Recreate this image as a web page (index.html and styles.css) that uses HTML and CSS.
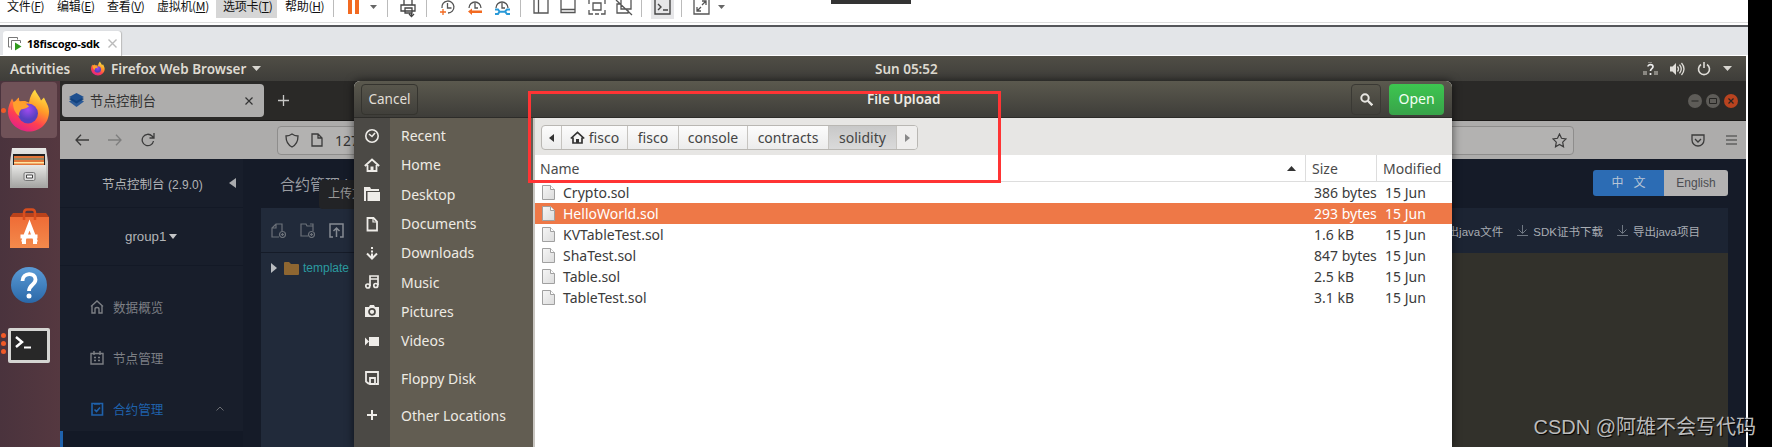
FILE: index.html
```html
<!DOCTYPE html>
<html lang="zh">
<head>
<meta charset="utf-8">
<title>18fiscogo-sdk</title>
<link rel="stylesheet" href="styles.css">
</head>
<body>
<div class="screen">
<div class="vm">
  <div class="menubar">
    <div class="menus">
      <span>文件(<u>F</u>)</span><span>编辑(<u>E</u>)</span><span>查看(<u>V</u>)</span><span>虚拟机(<u>M</u>)</span><span class="hot">选项卡(<u>T</u>)</span><span>帮助(<u>H</u>)</span>
    </div>
    <div class="tools">
      <i class="sep"></i>
      <div class="slot pause"><svg width="14" height="14"><path d="M1 0h4v14H1zM8 0h4v14H8z" fill="#f26a21"/></svg><svg width="7" height="4"><path d="M0 0h7L3.500 4z" fill="#666"/></svg></div>
      <i class="sep"></i>
      <div class="slot printer"><svg width="16" height="18" fill="none" stroke="#444" stroke-width="1.300"><path d="M4 5V0M12 5V0M1 5h14v6H1zM5 8h7v5H5zM11.500 13v3M9 14l2.500 2.500L14 14"/></svg></div>
      <i class="sep"></i>
      <div class="slots">
        <svg width="16" height="16" fill="none" stroke="#555" stroke-width="1.300"><path d="M3 8A6 6 0 1 1 9 13M8.500 3v5h4"/><path d="M4 9v6M1 12h6" stroke="#f26a21"/></svg>
        <svg width="16" height="16" fill="none" stroke="#555" stroke-width="1.300"><path d="M2 8A6 6 0 1 1 14 8M8 3v5h3"/><path d="M1 11.500l4-3v2h10v2.500H5v2z" fill="#f26a21" stroke="none"/></svg>
        <svg width="16" height="16" fill="none" stroke="#555" stroke-width="1.300"><path d="M2 8A6 6 0 1 1 14 8M8 3v5h3"/><path d="M1 9.500h3l1.500 2L4 14H1M5 11.700h6M16 9.500h-3l-2 2 2 2.500h3" stroke="#2a9ad8" stroke-width="2"/></svg>
      </div>
      <i class="sep"></i>
      <div class="slots">
        <svg width="16" height="16" fill="none" stroke="#555" stroke-width="1.300"><path d="M1 0v13h14V0M5.500 0v13"/></svg>
        <svg width="16" height="16" fill="none" stroke="#555" stroke-width="1.300"><path d="M1 0v12.500h14V0M1 9.500h14"/></svg>
        <svg width="18" height="16" fill="none" stroke="#555" stroke-width="1.300"><path d="M5 3h8v7H5zM1 10v4h4M17 10v4h-4M7 14h4M1 0v4M17 0v4"/></svg>
        <svg width="18" height="16" fill="none" stroke="#555" stroke-width="1.300"><path d="M5 4H2v9h11v-3M6 0v9h10V0M1 0l16 15"/></svg>
      </div>
      <i class="sep"></i>
      <div class="slot console"><svg width="17" height="16" fill="none" stroke="#444" stroke-width="1.400"><path d="M1 0v14h15V0M4 4l3 3-3 3M9 10h5"/></svg></div>
      <i class="sep"></i>
      <div class="slot expand"><svg width="17" height="16" fill="none" stroke="#555" stroke-width="1.300"><path d="M1 0v14h15V0M4 7v4h4M4 11l4-4M9 5l4-4M9 1h4v4"/></svg><svg width="7" height="4"><path d="M0 0h7L3.500 4z" fill="#666"/></svg></div>
    </div>
    <div class="handle"></div>
  </div>
  <div class="vmtabs">
    <div class="vmtab">
      <svg width="14" height="14" fill="none" stroke="#777"><path d="M2.500 10H.5V.5h9v2M4 12.500h-.5v-9h9V6"/><path d="M7 5.500l6.500 4L7 13.500z" fill="#2f9a1d" stroke="none"/></svg>
      <b>18fiscogo-sdk</b>
      <svg width="9" height="9" stroke="#bbb" stroke-width="1.400"><path d="M.5.5l8 8M8.500.5l-8 8"/></svg>
    </div>
  </div>
  <div class="guest">
    <div class="topbar">
      <span class="act">Activities</span>
      <svg class="ffs" viewBox="0 0 42 42"><use href="#fox"/></svg>
      <span class="app">Firefox Web Browser</span>
      <svg class="tri" width="9" height="5"><path d="M0 0h9L4.500 5z" fill="#d8d6d0"/></svg>
      <span class="clock">Sun 05:52</span>
      <div class="tray">
        <svg width="15" height="14"><path d="M0 9h4v4H0zM11 9h4v4h-4zM5 0h4v1H5z" fill="#8a8882"/><path d="M5 4.500C5 2 10 2 10 4.700c0 2-2.500 1.900-2.500 4.300M7.500 11v2" fill="none" stroke="#eee" stroke-width="1.700"/></svg>
        <svg width="15" height="14" fill="none" stroke="#dfddd8" stroke-width="1.300"><path d="M0 4.500h2.500L6 1v12L2.500 9.500H0z" fill="#dfddd8" stroke="none"/><path d="M7.500 4.500q2 2.500 0 5M9.500 2.700q3.500 4.300 0 8.600M11.500 1q5 6 0 12"/></svg>
        <svg width="14" height="14" fill="none" stroke="#dfddd8" stroke-width="1.600"><path d="M4 2.500a5.500 5.500 0 1 0 6 0M7 0v6"/></svg>
        <svg width="9" height="5"><path d="M0 0h9L4.500 5z" fill="#d8d6d0"/></svg>
      </div>
    </div>
    <div class="desk">
      <div class="launcher">
        <div class="lt on"><i class="dot"></i><svg width="42" height="43" viewBox="0 0 42 42">
          <defs>
            <linearGradient id="fg" x1=".8" y1="0" x2=".3" y2="1"><stop offset="0" stop-color="#fff04a"/><stop offset=".4" stop-color="#ff9a28"/><stop offset=".7" stop-color="#ff4050"/><stop offset="1" stop-color="#e0208a"/></linearGradient>
            <radialGradient id="fp" cx=".5" cy=".3"><stop offset="0" stop-color="#a04af0"/><stop offset="1" stop-color="#5840c0"/></radialGradient>
            <linearGradient id="gr" x1="0" y1="0" x2="0" y2="1"><stop offset="0" stop-color="#e8e8e6"/><stop offset="1" stop-color="#a5a5a3"/></linearGradient>
            <linearGradient id="or" x1="0" y1="0" x2="0" y2="1"><stop offset="0" stop-color="#ef6c36"/><stop offset="1" stop-color="#f38a4c"/></linearGradient>
            <linearGradient id="bl" x1="0" y1="0" x2="0" y2="1"><stop offset="0" stop-color="#5b9bd6"/><stop offset="1" stop-color="#2a68a8"/></linearGradient>
            <g id="fox"><path d="M27 0c1 4 5 7 6 11l3-3c1 3 5 8 5 14 0 12-9 20-20 20S0 33 0 22c0-5 2-9 4-13l2 4c2-2 3-4 5-5 0 2 0 3 1 4 5-1 6 0 9 1 1-6 3-10 6-13z" fill="url(#fg)"/><circle cx="20" cy="24" r="10" fill="url(#fp)"/><path d="M5 13c4-3 8-1 11 0 2 1 4 3 5 4-3 2-5 2-8 3-1 2-3 4-1 7-5-3-7-8-7-14z" fill="#ffa02d"/></g>
          </defs><use href="#fox"/></svg></div>
        <div class="lt files"><svg width="38" height="40"><path d="M2 0h34l2 14v26H0V14z" fill="url(#gr)"/><path d="M3 6h32v12H3z" fill="#222"/><path d="M4 8h30v2H4zM4 12h30v5H4z" fill="#e2763a"/><path d="M4 10.500h30v1H4zM4 14h30v1.500H4z" fill="#ffe4a0"/><path d="M2 17h34v22H2z" fill="url(#gr)"/><rect x="14" y="24.500" width="11" height="8" rx="1.500" fill="#ddd" stroke="#777"/><path d="M16.500 27h6v3h-6z" fill="#fff" stroke="#444"/></svg></div>
        <div class="lt soft"><svg width="39" height="40"><path d="M0 9l3-4h33l3 4z" fill="#b9421b"/><path d="M0 9h39v31H0z" fill="url(#or)"/><path d="M14 12V5q0-3.500 3-3.500h5q3 0 3 3.500v7" fill="none" stroke="#d84e1e" stroke-width="2.500"/><path d="M13 34l6.500-17L26 34M10.500 28.500h17M12 34h4M23 34h4" fill="none" stroke="#fff" stroke-width="4"/></svg></div>
        <div class="lt help"><svg width="38" height="38"><circle cx="19" cy="19" r="18" fill="url(#bl)"/><path d="M12.500 15c0-9 13-9 13-1.500 0 5.500-6.500 5-6.500 11.500" fill="none" stroke="#fff" stroke-width="3.800"/><circle cx="19" cy="30" r="2.500" fill="#fff"/></svg></div>
        <div class="lt term"><div class="dots"><i></i><i></i><i></i></div><svg width="42" height="35"><rect width="42" height="35" rx="2" fill="#d5d5d2"/><rect x="3" y="3" width="36" height="29" fill="#282828"/><path d="M8 9l6 5-6 5" fill="none" stroke="#fff" stroke-width="2.500"/><path d="M16 19.500h7" stroke="#fff" stroke-width="2"/></svg></div>
      </div>
      <div class="browser">
        <div class="tabstrip">
          <div class="tab"><svg width="15" height="15"><path d="M7.500 4L15 8.500 7.500 14 0 8.500z" fill="#2c5a96"/><path d="M7.500 2L15 6 7.500 10.500 0 6z" fill="#12427e"/><path d="M7.500 0L15 4 7.500 8 0 4z" fill="#1d4f8f"/></svg><span>节点控制台</span><svg width="8" height="8" stroke="#333" stroke-width="1.200"><path d="M.5.5l7 7M7.500.5l-7 7"/></svg></div>
          <svg class="plus" width="11" height="11" stroke="#c8c8c6" stroke-width="1.300"><path d="M5.500 0v11M0 5.500h11"/></svg>
          <div class="winbtns">
            <svg width="14" height="14"><circle cx="7" cy="7" r="7" fill="#5e5c58"/><path d="M3.500 7h7" stroke="#252422"/></svg>
            <svg width="14" height="14"><circle cx="7" cy="7" r="7" fill="#5e5c58"/><path d="M3.500 4.500h7v5h-7z" fill="none" stroke="#252422"/></svg>
            <svg width="14" height="14"><circle cx="7" cy="7" r="7" fill="#b8431f"/><path d="M4.500 4.500l5 5M9.500 4.500l-5 5" stroke="#252422" stroke-width="1.200"/></svg>
          </div>
        </div>
        <div class="navbar">
          <svg width="14" height="12" fill="none" stroke="#3b3b3b" stroke-width="1.300"><path d="M14 6H1M6 .7L1 6l5 5.300"/></svg>
          <svg width="14" height="12" fill="none" stroke="#7d7d7d" stroke-width="1.300"><path d="M0 6h13M8 .7L13 6l-5 5.300"/></svg>
          <svg width="14" height="14" fill="none" stroke="#3b3b3b" stroke-width="1.300"><path d="M12.500 8A5.700 5.700 0 1 1 11 3l2 2M13 0v5H8.500"/></svg>
          <div class="url">
            <svg width="14" height="15" fill="none" stroke="#3b3b3b" stroke-width="1.300"><path d="M7 1c2 1.500 4 2 6 2 0 6-2 9-6 11C3 12 1 9 1 3c2 0 4-.5 6-2z"/></svg>
            <svg width="12" height="14" fill="none" stroke="#3b3b3b" stroke-width="1.300"><path d="M1 1h6l4 4v8H1zM7 1v4h4"/></svg>
            <span>127.0.0.1:5000</span>
            <svg class="star" width="15" height="15" fill="none" stroke="#3b3b3b" stroke-width="1.200"><path d="M7.500 1l2 4.300 4.500.6-3.300 3.200.8 4.700-4-2.300-4 2.300.8-4.700L1 5.900l4.500-.6z"/></svg>
          </div>
          <svg class="pocket" width="14" height="13" fill="none" stroke="#3b3b3b" stroke-width="1.300"><path d="M1 1h12v5a6 6 0 0 1-12 0zM4 5l3 3 3-3"/></svg>
          <svg class="burger" width="11" height="10" stroke="#3b3b3b" stroke-width="1.200"><path d="M0 1h11M0 5h11M0 9h11"/></svg>
        </div>
        <div class="page">
          <div class="side">
            <div class="brand"><span>节点控制台 <small>(2.9.0)</small></span><svg width="7" height="10"><path d="M7 0v10L0 5z" fill="#a9abae"/></svg></div>
            <div class="group">group1<svg width="8" height="5"><path d="M0 0h8L4 5z" fill="#c4c5c7"/></svg></div>
            <div class="nav">
              <div><svg width="14" height="14" fill="none" stroke="#7c7f84" stroke-width="1.400"><path d="M1 6.500L7 1l6 5.500M2 6v7h3V9q0-1.500 2-1.500T9 9v4h3V6"/></svg>数据概览</div>
              <div><svg width="14" height="14" fill="none" stroke="#7c7f84" stroke-width="1.400"><path d="M1 2.500h12V13H1zM4 0v4M10 0v4M4 6.500h2M8 6.500h2M4 9.500h2M8 9.500h2"/></svg>节点管理</div>
              <div class="cur"><svg width="14" height="14" fill="none" stroke="#1f62ac" stroke-width="1.600"><path d="M2 1.500h10.500v11.500H2zM4 2h6M4.500 7.500l2 2 3.500-4"/></svg>合约管理<svg class="up" width="8" height="5" fill="none" stroke="#6a6d72"><path d="M.5 4.500L4 1l3.500 3.500"/></svg></div>
            </div>
            <div class="sub"></div>
          </div>
          <div class="main">
            <div class="head"><span>合约管理 | 合约IDE</span><div class="lang"><b>中&nbsp;&nbsp;&nbsp;文</b><em>English</em></div></div>
            <div class="ide">
              <div class="tree">
                <div class="treebar">
                  <svg width="15" height="15" fill="none" stroke="#6b7078" stroke-width="1.200"><path d="M8 14H1V5l4-4h6v7M1 5h4V1"/><circle cx="11.500" cy="11.500" r="3"/><path d="M11.500 10v3M10 11.500h3"/></svg>
                  <svg width="15" height="15" fill="none" stroke="#6b7078" stroke-width="1.200"><path d="M8 13H1V1h5l1 2h6v5M10 1h3v2"/><circle cx="11.500" cy="11.500" r="3"/><path d="M11.500 10v3M10 11.500h3"/></svg>
                  <svg width="15" height="15" fill="none" stroke="#858a92" stroke-width="1.500"><path d="M4 14H1V1h13v13h-3M7.500 14V5M4.500 8l3-3 3 3"/></svg>
                </div>
                <div class="treerow"><svg width="6" height="10"><path d="M0 0v10l6-5z" fill="#b9bcc0"/></svg><svg width="15" height="13"><path d="M0 1q0-1 1-1h4l2 2h7q1 0 1 1v9q0 1-1 1H1q-1 0-1-1z" fill="#8e6631"/></svg>template</div>
              </div>
              <div class="code">
                <div class="codebar"><span>导出java文件</span><svg width="11" height="11" fill="none" stroke="#707883"><path d="M5.500 0v8M1.500 4.500l4 4 4-4M0 10.500h11"/></svg><span>SDK证书下载</span><svg width="11" height="11" fill="none" stroke="#707883"><path d="M5.500 0v8M1.500 4.500l4 4 4-4M0 10.500h11"/></svg><span>导出java项目</span></div>
                <div class="editor"></div>
              </div>
            </div>
            <div class="tip">上传文件</div>
          </div>
        </div>
      </div>
    </div>
    <div class="dialog">
      <div class="dhead"><div class="cancel">Cancel</div><b>File Upload</b><div class="search"><svg width="13" height="13" fill="none" stroke="#e8e6e2" stroke-width="2"><circle cx="5" cy="5" r="3.700"/><path d="M7.800 7.800l4.500 4.500" stroke-width="2.300"/></svg></div><div class="open">Open</div></div>
      <div class="dbody">
        <div class="places">
          <div><svg viewBox="0 0 16 16" fill="none" stroke="#eeece8" stroke-width="1.600"><circle cx="8" cy="8" r="6.200"/><path d="M5 6l3 2.500L11 5"/></svg><span>Recent</span></div>
          <div><svg viewBox="0 0 16 16" fill="none" stroke="#eeece8" stroke-width="1.800"><path d="M.8 9L8 2.500 15.200 9M3.500 8v6h9V8"/><path d="M6.500 9.500h3V14h-3z" fill="#eeece8" stroke="none"/></svg><span>Home</span></div>
          <div><svg viewBox="0 0 16 16" fill="#eeece8"><path d="M0 1h6l1 2h8v2H2v10H0zM3.500 6H16v9H3.500z"/></svg><span>Desktop</span></div>
          <div><svg viewBox="0 0 16 16" fill="none" stroke="#eeece8" stroke-width="1.800"><path d="M3.500 2h6l3.500 3.500V14.500H3.500z"/><path d="M9 2v4h4" stroke-width="1.200"/></svg><span>Documents</span></div>
          <div><svg viewBox="0 0 16 16" fill="none" stroke="#eeece8" stroke-width="2"><path d="M8 2v2M8 5.500v2M8 8.500V13M3 8.500L8 13.500l5-5"/></svg><span>Downloads</span></div>
          <div><svg viewBox="0 0 16 16" fill="none" stroke="#eeece8" stroke-width="1.700"><path d="M6 12V2h8v9M6 5h8"/><circle cx="3.800" cy="12" r="2"/><circle cx="11.800" cy="11.500" r="2"/></svg><span>Music</span></div>
          <div><svg viewBox="0 0 16 16"><path d="M1 4h4l1-2h4l1 2h4v10H1z" fill="#eeece8"/><circle cx="8" cy="8.800" r="3" fill="none" stroke="#4b4945" stroke-width="1.700"/></svg><span>Pictures</span></div>
          <div><svg viewBox="0 0 16 16" fill="#eeece8"><path d="M5 4h10v9H5zM1 4.500l4 4-4 4z"/></svg><span>Videos</span></div>
          <div class="gap"><svg viewBox="0 0 16 16" fill="none" stroke="#eeece8" stroke-width="1.800"><path d="M5 14L2 11.500V2h12v12h-2M6 14V8h5v6z"/></svg><span>Floppy Disk</span></div>
          <div class="gap"><svg viewBox="0 0 16 16" stroke="#eeece8" stroke-width="2"><path d="M8 3v10M3 8h10"/></svg><span>Other Locations</span></div>
        </div>
        <div class="list">
          <div class="path"><div class="crumbs">
            <span class="c1"><svg width="5" height="8"><path d="M5 0v8L0 4z" fill="#333"/></svg></span><span class="c2"><svg width="15" height="13" fill="none" stroke="#333" stroke-width="1.700"><path d="M.8 7.500L7.500 1.300l6.700 6.200M3 6.500V12h9V6.500"/><path d="M6 8h3v4H6z" fill="#333" stroke="none"/></svg>fisco</span><span class="c3">fisco</span><span class="c4">console</span><span class="c5">contracts</span><span class="c6">solidity</span><span class="c7"><svg width="5" height="8"><path d="M0 0v8l5-4z" fill="#888"/></svg></span>
          </div></div>
          <div class="row th"><span>Name<svg width="9" height="5"><path d="M0 5h9L4.500 0z" fill="#333"/></svg></span><span>Size</span><span>Modified</span></div>
          <div class="row"><span><svg class="doc"><use href="#doc"/></svg>Crypto.sol</span><span>386 bytes</span><span>15 Jun</span></div>
          <div class="row sel"><span><svg class="doc"><use href="#doc"/></svg>HelloWorld.sol</span><span>293 bytes</span><span>15 Jun</span></div>
          <div class="row"><span><svg class="doc"><use href="#doc"/></svg>KVTableTest.sol</span><span>1.6 kB</span><span>15 Jun</span></div>
          <div class="row"><span><svg class="doc"><use href="#doc"/></svg>ShaTest.sol</span><span>847 bytes</span><span>15 Jun</span></div>
          <div class="row"><span><svg class="doc"><use href="#doc"/></svg>Table.sol</span><span>2.5 kB</span><span>15 Jun</span></div>
          <div class="row"><span><svg class="doc"><use href="#doc"/></svg>TableTest.sol</span><span>3.1 kB</span><span>15 Jun</span></div>
        </div>
      </div>
    </div>
  </div>
</div>
<div class="mark"></div>
<div class="water">CSDN @阿雄不会写代码</div>
</div>
<svg class="defs"><defs><linearGradient id="dg" x1="0" y1="0" x2="1" y2="1"><stop offset="0" stop-color="#f6f6f6"/><stop offset="1" stop-color="#dcdcdc"/></linearGradient><g id="doc"><path d="M.5.5h8l4 4v10H.5z" fill="url(#dg)" stroke="#a0a0a0"/><path d="M8.500.5v4h4" fill="#fff" stroke="#a0a0a0"/></g></defs></svg>
</body>
</html>
```
FILE: styles.css
```css
*{box-sizing:border-box}
body{margin:0;background:#000;overflow:hidden;font-family:"Noto Sans","Noto Sans CJK SC",sans-serif}
svg{display:block;flex:none}
.defs{position:absolute;width:0;height:0}
.screen{position:relative;width:1772px;height:447px;overflow:hidden}
.vm{width:1748px;height:447px;background:#fff;display:flex;flex-direction:column}
.menubar{height:27px;display:flex;align-items:flex-start;position:relative;border-bottom:2px solid #55565a;box-shadow:inset 0 -2px #fff,inset 0 -3px #ddd}
.menus{display:flex;font:12px/18px "Noto Sans CJK SC",sans-serif;color:#111;height:18px;white-space:nowrap;width:333px}
.menus span{width:50px;padding-left:7px;line-height:11px;letter-spacing:-.3px}
.menus span:nth-child(4){width:66px}
.menus .hot{width:61px;background:#d6d6d6}
.menus span:last-child{padding-left:8px}
.tools{display:flex;height:20px}
.sep{width:1px;height:17px;background:#bbb}
.slot{display:flex;align-items:flex-start}
.pause{width:53px;padding-left:13px;gap:9px}
.pause svg:last-child,.expand svg:last-child{margin-top:5px}
.printer{width:38px;padding-left:12px}
.slots{display:flex;padding:0 5px 0 5px}
.slots svg{width:27.500px;padding-left:7px;overflow:visible}
.console{width:39px;padding-left:12px}
.console svg{box-shadow:0 0 0 3px #e6e6e8;background:#e6e6e8}
.expand{padding-left:11px;gap:8px}
.handle{position:absolute;left:831px;top:0;width:80px;height:4px;background:#333}
.vmtabs{height:29px;background:#e3e5e8;border-bottom:1px solid #fff;padding:4px 0 0 3px}
.vmtab{width:118px;height:25px;background:#fff;border-radius:3px 3px 0 0;display:flex;align-items:center;padding-left:5px;gap:5px;box-shadow:1px 0 1px #bbb}
.vmtab b{font:bold 11.200px "Open Sans",sans-serif;color:#000;width:73px;white-space:nowrap;letter-spacing:-.2px}
.vmtab svg:last-child{margin-left:3px}
.guest{position:relative;width:1746px;height:391px}
.topbar{height:25px;background:linear-gradient(#504e46,#3e3d39);display:flex;align-items:center;color:#dfdbd2;font-size:13.500px;font-weight:600;position:relative;padding-left:10px;white-space:nowrap}
.act{width:81px}
.ffs{width:14px;height:15px;margin-right:6px}
.app{width:141px}
.clock{width:62px;margin-left:614px}
.tray{margin-left:auto;display:flex;align-items:center;gap:12px;padding-right:14px}
.desk{display:flex;height:366px}
.launcher{width:60px;background:linear-gradient(90deg,#4a333d,#553840);padding:1px 1px}
.lt{position:relative;width:56px;display:flex;justify-content:center;align-items:center;height:56px;border-radius:4px}
.on{background:#705258}
.dot{position:absolute;left:0;top:26px;width:5px;height:5px;border-radius:50%;background:#f05a28}
.files{margin-top:2px}.soft{margin-top:4px}.help{margin-top:1px}.term{margin-top:4px}
.dots{position:absolute;left:0;top:16px;display:grid;gap:3px}
.dots i{width:5px;height:5px;border-radius:50%;background:#f05a28}
.browser{flex:1;display:flex;flex-direction:column;background:#151b28;min-width:0}
.tabstrip{height:40px;background:#2a2927;display:flex;align-items:center;padding:0 8px 0 2px;border-bottom:1px solid #1b1a19}
.tab{width:202px;height:33px;background:#aeadac;border-radius:4px;display:flex;align-items:center;padding-left:7px;gap:6px;font:13.200px "Noto Sans CJK SC";color:#333}
.tab svg:last-child{margin-left:auto;margin-right:11px}
.plus{margin-left:14px}
.winbtns{margin-left:auto;display:flex;gap:4px}
.navbar{height:38px;background:#adacab;display:flex;align-items:center;padding-left:15px;gap:19px}
.url{width:1297px;height:29px;margin-left:103px;border:1px solid #8e8d8c;border-radius:4px;background:#b3b2b1;display:flex;align-items:center;padding-left:7px;gap:12px;font-size:14px;color:#333}
.star{margin-left:auto;margin-right:6px}
.pocket{margin-left:98px}
.burger{margin-left:2px}
.page{flex:1;display:flex;min-height:0;font-family:"Liberation Sans","Noto Sans CJK SC",sans-serif}
.side{width:183px;background:#181e2b;color:#7c7f84;flex:none}
.brand{height:49px;border-bottom:1px solid #131926;display:flex;align-items:center;padding-left:42px;color:#b2b4b7;font-size:12.500px;white-space:nowrap}
.brand small{font-size:12px}
.brand span{width:127px}
.group{height:58px;border-bottom:1px solid #131926;display:flex;align-items:center;gap:3px;padding-left:65px;font-size:13.300px;color:#b2b4b7}
.nav{padding-top:15px}
.nav div{height:51px;display:flex;align-items:center;padding-left:30px;gap:9px;font-size:12.600px}
.nav .cur{color:#1f62ac}
.up{margin-left:44px}
.sub{border-left:3px solid #1f62ac;height:40px;margin-top:-3px;background:#131926}
.main{position:relative;flex:1;padding:0 18px 0 18px;min-width:0}
.head{height:49px;display:flex;justify-content:space-between;align-items:center;padding-left:19px;font-size:15px;color:#999ca1}
.lang{display:flex;font-size:12px;height:26px;border-radius:3px;overflow:hidden;margin-bottom:2px}
.lang b{width:71px;background:#2c6cb4;color:#b9c6d6;font-weight:400;text-align:center;line-height:26px}
.lang em{width:64px;background:#b3b2b2;color:#4b4d51;font-style:normal;text-align:center;line-height:26px}
.ide{display:flex;height:240px}
.tree{width:220px;background:#212a3a}
.treebar{height:45px;border-bottom:1px solid #151b28;display:flex;align-items:center;padding-left:10px;gap:14px}
.treerow{display:flex;align-items:center;height:30px;padding-left:10px;gap:7px;font-size:12px;color:#2b9ba0}
.treerow svg:nth-child(2){margin-right:-3px}
.code{flex:1}
.codebar{height:45px;background:#1c2433;display:flex;align-items:center;justify-content:flex-end;padding-right:28px;color:#a9adb3;font-size:11.500px;white-space:nowrap}
.codebar svg{margin:0 5px 0 14px}
.editor{height:195px;background:#32312b}
.tip{position:absolute;left:76px;top:21px;width:90px;height:29px;background:#222326;border-radius:4px;color:#999;font-size:12px;line-height:29px;padding-left:9px}
.dialog{position:absolute;left:354px;top:25px;width:1098px;height:366px;border-radius:6px 6px 0 0;overflow:hidden;box-shadow:0 0 10px #0009;background:#fff;font-size:14px}
.dhead{height:37px;background:linear-gradient(#5b594e,#3e3d39);border-bottom:1px solid #2d2c29;display:flex;align-items:center;color:#e2dfd7}
.cancel{width:57px;height:31px;margin-left:7px;border:1px solid #35342f;border-radius:4px;text-align:center;line-height:28px;font-size:13.500px}
.dhead b{margin-left:449px;width:73px;font-weight:600;font-size:13.500px;color:#eeebe3;white-space:nowrap}
.search{width:30px;height:31px;margin-left:auto;border:1px solid #3a3934;border-radius:4px;display:grid;place-items:center}
.open{width:55px;height:31px;margin:0 8px 0 8px;border-radius:4px;background:linear-gradient(#3dc650,#38a349);color:#f4fff4;text-align:center;line-height:30px}
.dbody{display:flex;height:329px}
.places{width:179px;background:linear-gradient(90deg,#4b4945 36px,#625d52 36px);padding-top:3px;color:#eeebe4}
.places div{height:29.300px;display:flex;align-items:center;padding-left:10px}
.places svg{width:16px;height:16px;margin-right:21px}
.places .gap{margin-top:8px}
.list{flex:1;border-left:2px solid #c9c6c1;background:#fff;color:#444}
.path{height:37px;background:#e7e6e4;padding:7px 0 0 6px}
.crumbs{display:inline-flex;height:25px;border:1px solid #b9b7b3;border-radius:4px;overflow:hidden;background:linear-gradient(#fcfcfc,#ececec)}
.crumbs span{display:flex;align-items:center;justify-content:center;gap:4px;border-right:1px solid #c6c4c0;line-height:20px}
.c1{width:20px}.c2{width:66px}.c3{width:51px}.c4{width:69px}.c5{width:81px}
.crumbs .c6{width:68px;background:linear-gradient(#c8c8c8,#dadada)}
.crumbs .c7{width:20px;border:0;background:#efeeed}
.row{display:grid;grid-template-columns:771px 71px 1fr;height:21px;align-items:center;white-space:nowrap;color:#3b3b3b}
.row span{display:flex;align-items:center;padding-left:8px}
.row span:first-child{padding-left:7px}
.doc{width:13px;height:15px;margin-right:8px}
.th{height:27px;border-bottom:1px solid #ddd;color:#4a4a4a}
.th span{height:26px;border-right:1px solid #ddd;padding-left:6px}
.th span:first-child{padding-left:5px}
.th span:last-child{border:0}
.th svg{margin-left:auto;margin-right:9px}
.sel{background:#ee7847;color:#fff}
.mark{position:absolute;left:528px;top:91px;width:473px;height:92px;border:3px solid #ff3434}
.water{position:absolute;right:16px;top:413px;font:20px/28px "Liberation Sans","Noto Sans CJK SC",sans-serif;color:#bbb;text-shadow:1px 1px 1px #000;white-space:nowrap}
```
